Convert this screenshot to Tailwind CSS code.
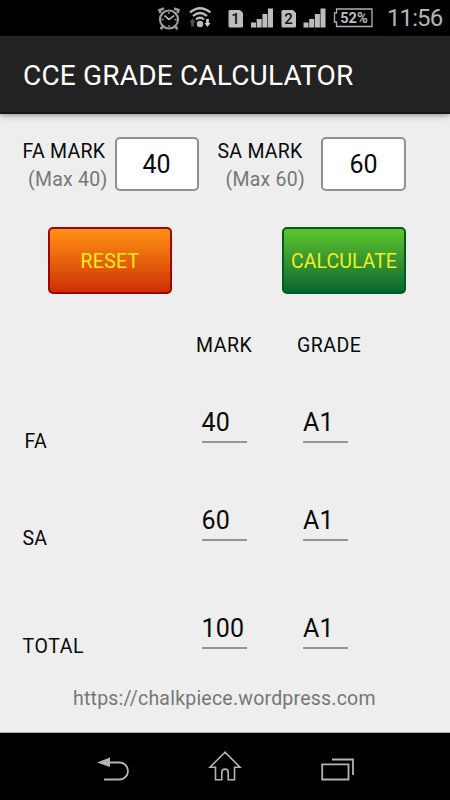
<!DOCTYPE html>
<html lang="en">
<head>
<meta charset="utf-8">
<title>CCE Grade Calculator</title>
<script src="https://cdn.jsdelivr.net/npm/@tailwindcss/browser@4"></script>
</head>
<body class="w-[450px] h-[800px] overflow-hidden bg-[#eeeeee] font-['Roboto',sans-serif] text-[#0a0a0a] text-[19.5px] tracking-[0.25px] whitespace-nowrap flex flex-col">
  <!-- Status bar -->
  <header class="h-9 shrink-0 bg-black flex items-center text-[#b8b8b8]">
    <svg class="w-[382px] h-9 shrink-0 tracking-normal" viewBox="0 0 382 36" fill="none">
      <g stroke="#9c9c9c" stroke-width="2.2">
        <circle cx="169" cy="19.500" r="9"/>
        <path d="M160.500 13l-1-3 4.500-1.500M177.500 13l1-3-4.500-1.500M163 26.500l-2.500 2.500M175 26.500l2.500 2.500" stroke-width="2.500"/>
        <path d="M164.500 15.500l4.500 4 5-4" stroke="#c8c8c8" stroke-width="1.600"/>
        <path d="M169 12v2M169 25v2M161.500 19.500h2M174.500 19.500h2" stroke-width="1.300"/>
      </g>
      <g stroke="#bcbcbc" stroke-width="2.200">
        <path d="M190 12.500q10-8.500 20.500 0M193 16q7-6 14 0M196 19.500q4-3.500 8 0"/>
      </g>
      <circle cx="200" cy="24" r="3.200" fill="#bcbcbc"/>
      <path d="M192.500 18.500l3 4h-1.700v4h-2.600v-4h-1.700z" fill="#555"/>
      <path d="M207.500 27l3-4h-1.700v-4h-2.600v4h-1.700z" fill="#d0d0d0"/>
      <g fill="#bdbdbd">
        <path d="M230 10h10l3 3v13q0 1.500-1.500 1.500H230q-1.500 0-1.500-1.500V11.500Q228.500 10 230 10z"/>
        <path d="M283 10h10l3 3v13q0 1.500-1.500 1.500H283q-1.500 0-1.500-1.500V11.500Q281.500 10 283 10z"/>
        <path d="M251 22.500h5v5h-5zM256.700 19h5v8.500h-5zM262.400 14h5v13.500h-5zM268 8.500h5v19h-5z"/>
        <path d="M303.500 22.500h5v5h-5zM309.200 19h5v8.500h-5zM314.900 14h5v13.500h-5zM320.500 8.500h5v19h-5z"/>
      </g>
      <g font-family="Roboto, sans-serif" font-size="15" font-weight="500" text-anchor="middle" fill="#111">
        <text x="235.500" y="24">1</text><text x="288.500" y="24">2</text>
      </g>
      <path d="M336.500 9h35.500v17.500h-35.500v-4.500h-2v-9h2z" stroke="#b0b0b0" stroke-width="1.300"/>
      <text x="354" y="22.700" font-family="Roboto, sans-serif" font-size="14" font-weight="700" text-anchor="middle" fill="#bdbdbd" textLength="27.500" lengthAdjust="spacingAndGlyphs">52%</text>
    </svg>
    <span class="ml-[5px] text-[24px] leading-9 tracking-[-0.9px] text-[#b5b5b5]">11:56</span>
  </header>

  <!-- Title bar -->
  <div class="h-[78px] shrink-0 bg-[#222222] border-t border-[#2b2b2b] border-b-2 border-b-[#161616] pl-[23px] pt-[2px] flex items-center relative shadow-[0_1px_6px_rgba(0,0,0,0.45)]">
    <h1 class="text-white text-[28px] leading-[40px] tracking-[0.18px]">CCE GRADE CALCULATOR</h1>
  </div>

  <main class="h-[619px] shrink-0 pt-[23px] flex flex-col border-b border-[#aaaaaa]">
    <!-- Mark inputs -->
    <section class="h-[54px] flex">
      <div class="w-[85px] ml-[22.5px] pt-px leading-[28px]">
        <div>FA MARK</div>
        <div class="pl-[5.5px] text-[#777777]">(Max 40)</div>
      </div>
      <div class="ml-[7px] w-[84px] h-[54px] rounded-[5px] border-2 border-[#909090] bg-white text-[25px] tracking-normal text-center leading-[52px]">40</div>
      <div class="w-[88px] ml-[19px] pt-px leading-[28px]">
        <div>SA MARK</div>
        <div class="pl-[8px] text-[#777777]">(Max 60)</div>
      </div>
      <div class="ml-[15.500px] w-[85px] h-[54px] rounded-[5px] border-2 border-[#909090] bg-white text-[25px] tracking-normal text-center leading-[52px]">60</div>
    </section>

    <!-- Actions -->
    <section class="mt-[36px] pl-[48px] flex gap-[110px] text-[#f3ee1c]">
      <button class="w-[124px] h-[67px] rounded-[5px] border-2 border-[#990800] bg-linear-to-b from-[#ff9015] to-[#cf2c06] leading-[66px]">RESET</button>
      <button class="w-[124px] h-[67px] rounded-[5px] border-2 border-[#005c1c] bg-linear-to-b from-[#5fc628] to-[#02682f] leading-[66px] tracking-[0.05px]">CALCULATE</button>
    </section>

    <!-- Results -->
    <section class="mt-[36px] grid grid-cols-[173px_101px_100px] pl-[23px] tracking-[0.5px]">
      <div class="col-start-2 h-[30px] leading-[31px]">MARK</div>
      <div class="h-[30px] leading-[31px]">GRADE</div>
    </section>
    <section class="mt-[47px] h-[36px] flex items-start">
      <div class="w-[177px] pl-[2px] ml-[22.5px] mt-[20px] leading-[30px]">FA</div>
      <div class="w-[45px] ml-[2px] h-[36px] border-b-2 border-[#959595] text-[25px] leading-[32px]">40</div>
      <div class="w-[45px] ml-[56.5px] h-[36px] border-b-2 border-[#959595] text-[25px] leading-[32px]">A1</div>
    </section>
    <section class="mt-[61px] h-[37px] flex items-start">
      <div class="w-[177px] ml-[22.5px] mt-[20px] leading-[30px]">SA</div>
      <div class="w-[45px] ml-[2px] h-[37px] border-b-2 border-[#959595] text-[25px] leading-[33px]">60</div>
      <div class="w-[45px] ml-[56.5px] h-[37px] border-b-2 border-[#959595] text-[25px] leading-[33px]">A1</div>
    </section>
    <section class="mt-[71px] h-[37px] flex items-start">
      <div class="w-[177px] ml-[22.5px] mt-[20px] leading-[30px] tracking-[0.6px]">TOTAL</div>
      <div class="w-[45px] ml-[2px] h-[37px] border-b-2 border-[#959595] text-[25px] leading-[33px]">100</div>
      <div class="w-[45px] ml-[56.5px] h-[37px] border-b-2 border-[#959595] text-[25px] leading-[33px]">A1</div>
    </section>
    <p class="mt-[34px] ml-[73px] text-[#777777] leading-[31px] tracking-[0.22px]">https://chalkpiece.wordpress.com</p>
  </main>

  <!-- Navigation bar -->
  <nav class="h-[67px] shrink-0 bg-black">
    <svg class="w-[450px] h-[67px]" viewBox="0 733 450 67" fill="none" stroke="#b4b4b4" stroke-width="1.800">
      <path d="M108 762.500h11.500a8.500 8.500 0 0 1 0 17H104"/>
      <path d="M97 762.500l13-5v9.500z" fill="#b4b4b4" stroke="none"/>
      <path d="M225 752.200l-15 15h5.500v12.600h6.300v-7.500a3.200 3.200 0 0 1 6.400 0v7.500h6.300v-12.600h5.500z" stroke-width="1.600"/>
      <path d="M322.200 764.300h26.300v15.200h-26.300zM332 759.500h21v15.500"/>
    </svg>
  </nav>
</body>
</html>
